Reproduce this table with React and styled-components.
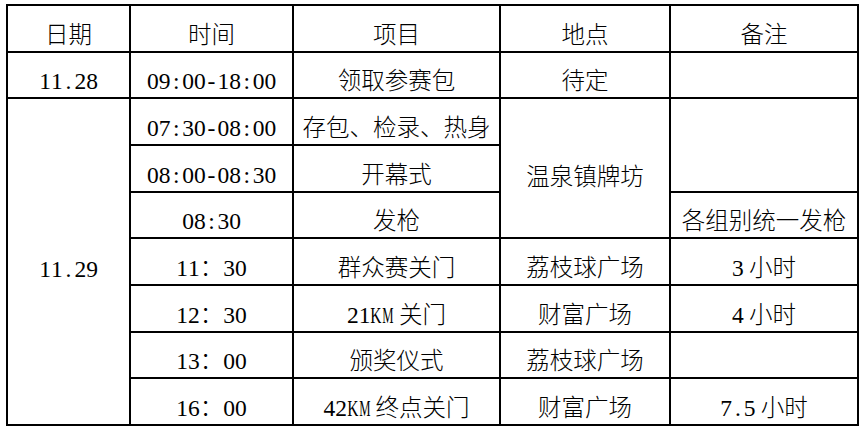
import React from 'react';
import styled, { createGlobalStyle } from 'styled-components';

const GlobalStyle = createGlobalStyle`
  body {
    margin: 0;
    background: #fff;
  }
`;

const Sheet = styled.table`
  margin: 4px 0 0 6px;
  width: 853px;
  border-collapse: collapse;
  table-layout: fixed;
  font-family: "Liberation Serif", "Noto Sans CJK SC", serif;
  font-size: 23.5px;
  color: #000;
`;

const Row = styled.tr`
  height: 46.67px;
`;

const Cell = styled.td`
  border: 2px solid #000;
  padding: ${p => (p.$merged ? '15px 0 0' : '0 0 4px')};
  text-align: center;
  vertical-align: ${p => (p.$merged ? 'middle' : 'bottom')};
  line-height: 24px;
  white-space: nowrap;
  font-size: 23.5px;
`;

// half-width glyphs, like the song-style font of the original sheet
const Half = styled.span`
  display: inline-flex;
  justify-content: center;
  width: 0.5em;
  font-family: "Liberation Serif", "Times New Roman", serif;
  font-weight: 400;
  transform: ${p => (p.$sx ? `scaleX(${p.$sx})` : 'none')};
`;

const Han = styled.span`
  font-family: "Noto Sans CJK SC", sans-serif;
  font-weight: 300;
`;

const SQUEEZE = { K: 0.66, M: 0.54 };

const Text = ({ value }) => {
  const parts = [];
  let buf = '';
  [...value].forEach((ch, i) => {
    if (/[0-9A-Za-z.:\-]/.test(ch)) {
      if (buf) {
        parts.push(<Han key={'h' + i}>{buf}</Han>);
        buf = '';
      }
      parts.push(<Half key={i} $sx={SQUEEZE[ch]}>{ch}</Half>);
    } else {
      buf += ch;
    }
  });
  if (buf) parts.push(<Han key="end">{buf}</Han>);
  return <>{parts}</>;
};

const widths = [123, 163, 207, 170, 188];

// each row lists only the cells that start in it; rs = rowspan
const rows = [
  [{ t: '日期' }, { t: '时间' }, { t: '项目' }, { t: '地点' }, { t: '备注' }],
  [{ t: '11.28' }, { t: '09:00-18:00' }, { t: '领取参赛包' }, { t: '待定' }, { t: '' }],
  [{ t: '11.29', rs: 7 }, { t: '07:30-08:00' }, { t: '存包、检录、热身' }, { t: '温泉镇牌坊', rs: 3 }, { t: '', rs: 2 }],
  [{ t: '08:00-08:30' }, { t: '开幕式' }],
  [{ t: '08:30' }, { t: '发枪' }, { t: '各组别统一发枪' }],
  [{ t: '11：30' }, { t: '群众赛关门' }, { t: '荔枝球广场' }, { t: '3 小时' }],
  [{ t: '12：30' }, { t: '21KM 关门' }, { t: '财富广场' }, { t: '4 小时' }],
  [{ t: '13：00' }, { t: '颁奖仪式' }, { t: '荔枝球广场' }, { t: '' }],
  [{ t: '16：00' }, { t: '42KM 终点关门' }, { t: '财富广场' }, { t: '7.5 小时' }],
];

export default function App() {
  return (
    <>
      <GlobalStyle />
      <Sheet>
        <colgroup>
          {widths.map((w, i) => (
            <col key={i} style={{ width: w }} />
          ))}
        </colgroup>
        <tbody>
          {rows.map((cells, r) => (
            <Row key={r}>
              {cells.map((c, i) => (
                <Cell key={i} rowSpan={c.rs} $merged={!!c.rs}>
                  <Text value={c.t} />
                </Cell>
              ))}
            </Row>
          ))}
        </tbody>
      </Sheet>
    </>
  );
}
